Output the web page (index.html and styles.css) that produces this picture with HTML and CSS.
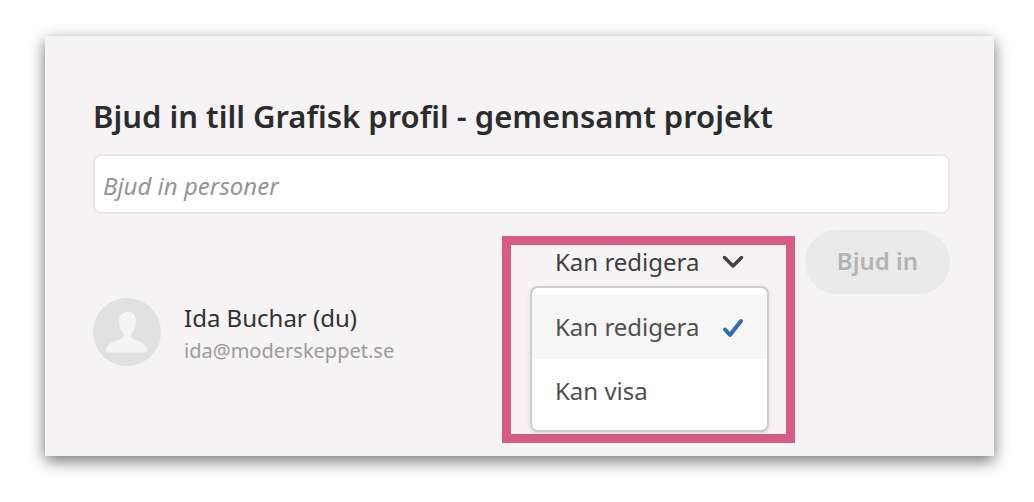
FILE: index.html
```html
<!DOCTYPE html>
<html lang="sv">
<head>
    <meta charset="UTF-8">
    <meta name="viewport" content="width=device-width, initial-scale=1.0">
    <title>Bjud in till Grafisk profil</title>
    <link rel="stylesheet" href="styles.css">
</head>
<body>
    <main class="card">
        <h1 class="title">Bjud in till Grafisk profil - gemensamt projekt</h1>
        <form class="invite">
            <input class="people" type="text" placeholder="Bjud in personer" aria-label="Bjud in personer">

            <div class="share">
                <div class="person">
                    <svg class="avatar" viewBox="0 0 68 68" aria-hidden="true">
                        <circle cx="34" cy="34" r="34" fill="#e1e1e1"/>
                        <path fill="#f5f3f4" d="M35 13.500C40 13.500 43 17.500 43 23C43 29 40.500 32.500 38.500 35C37.500 37 38 40 41 41.500C47 43.500 54 45.500 54 53Q54 54.500 52 54.500H15Q13 54.500 13 53C13.500 45.500 20 43.500 27 41.500C30.500 40 31 37 30 35C28 32.500 26 29 26 23C26 17.500 29 15 32 14.500Q33 13.500 35 13.500Z"/>
                    </svg>
                    <div class="who">
                        <div class="name">Ida Buchar (du)</div>
                        <div class="mail">ida@moderskeppet.se</div>
                    </div>
                </div>

                <div class="access">
                    <div class="current">
                        <select class="role" aria-label="Behörighet">
                            <option>Kan redigera</option>
                            <option>Kan visa</option>
                        </select>
                        <svg class="chevron" viewBox="0 0 22 14" aria-hidden="true">
                            <path d="M2.500 2.500L11 11L19.500 2.500"/>
                        </svg>
                    </div>
                    <div class="menu">
                        <button class="item picked" type="button">Kan redigera
                            <svg class="tick" viewBox="0 0 22 20" aria-hidden="true">
                                <path d="M3 11.500L8 17L19 3"/>
                            </svg>
                        </button>
                        <button class="item" type="button">Kan visa</button>
                    </div>
                </div>

                <button class="send" type="submit" disabled>Bjud in</button>
            </div>
        </form>
    </main>
</body>
</html>
```
FILE: styles.css
```css
* {
    box-sizing: border-box;
}
body {
    margin: 0;
    padding: 36px 40px 46px 45px;
    background-color: #fff;
    color: #4b4b4b;
    font-family: "Noto Sans", "Open Sans", sans-serif;
    font-size: 24px;
}
.card {
    padding: 60px 44px 13px 48px;
    background-color: #f5f3f4;
    box-shadow: 0 5px 15px rgba(0, 0, 0, 0.55);
}
.title {
    margin: 0 0 18px;
    color: #2c2c2c;
    font-size: 31px;
    font-weight: 600;
    line-height: 40px;
}
.people {
    display: block;
    width: 100%;
    height: 60px;
    padding: 2px 8px 0;
    border: 2px solid #e9e5e7;
    border-radius: 8px;
    background-color: #fff;
    font: inherit;
}
.people::placeholder {
    color: #959595;
    font-style: italic;
    opacity: 1;
}
.share {
    display: flex;
    align-items: flex-start;
    gap: 10px;
    margin-top: 16px;
}

/* person row */
.person {
    flex: 1;
    display: flex;
    align-items: center;
    gap: 23px;
    margin-top: 67px;
}
.avatar {
    width: 68px;
    height: 68px;
}
.who {
    padding-top: 4px;
}
.name {
    color: #323232;
    line-height: 34px;
}
.mail {
    color: #9b9b9b;
    font-size: 20px;
    line-height: 32px;
}

/* role picker */
.access {
    margin-top: 6px;
    padding: 0 17px 2px 19px;
    border: 9px solid #d65c86;
}
.current {
    display: flex;
    align-items: center;
    justify-content: space-between;
    height: 41px;
    padding: 0 25px 8px;
}
.role {
    appearance: none;
    padding: 0;
    border: 0;
    background: none;
    color: #3f3f3f;
    font: inherit;
}
.chevron {
    width: 22px;
    height: 14px;
    fill: none;
    stroke: #454143;
    stroke-width: 3.500;
    stroke-linecap: round;
    stroke-linejoin: round;
}
.menu {
    width: 239px;
    padding: 7px 0;
    border: 2px solid #cdcdcd;
    border-radius: 8px;
    background-color: #fff;
    box-shadow: 0 1px 4px rgba(0, 0, 0, 0.12);
}
.item {
    display: flex;
    align-items: center;
    justify-content: space-between;
    width: 100%;
    height: 64px;
    padding: 0 23px 2px;
    border: 0;
    background-color: #fff;
    color: #505050;
    font: inherit;
}
.picked {
    background-color: #f6f6f6;
}
.tick {
    width: 22px;
    height: 20px;
    margin-top: 4px;
    fill: none;
    stroke: #2f68bd;
    stroke-width: 4;
    stroke-linecap: round;
    stroke-linejoin: round;
}
.send {
    width: 145px;
    height: 64px;
    padding: 0 0 4px;
    border: 0;
    border-radius: 32px;
    background-color: #eaeaea;
    color: #b3b3b3;
    font: inherit;
    font-weight: 600;
}
```
